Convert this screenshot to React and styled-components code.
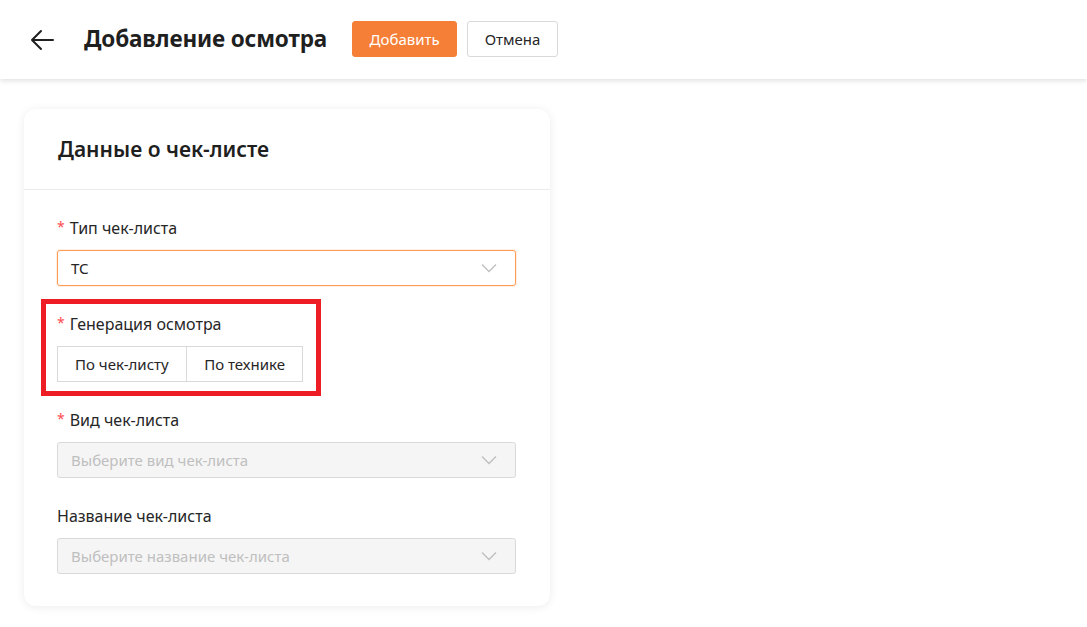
import React from "react"
import styled, { createGlobalStyle } from "styled-components"

const GlobalStyle = createGlobalStyle`
  html, body {
    margin: 0;
    padding: 0;
    background: #ffffff;
    font-family: "Noto Sans", "Open Sans", sans-serif;
    color: #1f1f1f;
  }
  * { box-sizing: border-box; }
`

const Header = styled.header`
  height: 79px;
  display: flex;
  align-items: center;
  padding: 0 0 0 28px;
  background: #fff;
  box-shadow: 0 2px 5px rgba(0, 0, 0, 0.12);
  position: relative;
  z-index: 1;
`

const BackButton = styled.button`
  border: 0;
  background: none;
  padding: 0;
  width: 28px;
  height: 28px;
  display: flex;
  align-items: center;
  justify-content: center;
  color: #1f1f1f;
  margin-right: 28px;
  cursor: pointer;
`

const Title = styled.h1`
  margin: 0 25px 0 0;
  font-size: 22.5px;
  font-weight: 700;
  letter-spacing: -0.15px;
  color: #1f1f1f;
  position: relative;
  top: -1px;
`

const Button = styled.button`
  height: 36px;
  padding: 0 16.5px;
  border-radius: 3px;
  font-family: inherit;
  font-size: 15px;
  margin-right: 10px;
  cursor: pointer;
  position: relative;
  top: -1px;
  border: 1px solid ${(p) => (p.$primary ? "#f67f37" : "#d9d9d9")};
  background: ${(p) => (p.$primary ? "#f67f37" : "#fff")};
  color: ${(p) => (p.$primary ? "#fff" : "#262626")};
`

const Main = styled.main`
  padding: 30px 24px;
`

const Card = styled.section`
  width: 526px;
  background: #fff;
  border-radius: 12px;
  box-shadow: 0 1px 10px rgba(0, 0, 0, 0.08);
`

const CardHeader = styled.div`
  height: 81px;
  display: flex;
  align-items: center;
  padding: 0 34px;
  border-bottom: 1px solid #ececec;
`

const CardTitle = styled.h2`
  margin: 0;
  font-size: 21px;
  font-weight: 600;
  color: #1f1f1f;
`

const CardBody = styled.div`
  padding: 26px 34px 32px 33px;
  display: flex;
  flex-direction: column;
  gap: 26px;
`

const Field = styled.div`
  position: relative;
`

const Label = styled.div`
  font-size: 16px;
  line-height: 24px;
  margin-bottom: 10px;
  color: #262626;
  display: flex;
  align-items: center;
`

const Star = styled.span`
  color: #ff4d4f;
  font-size: 14px;
  margin-right: 5px;
  position: relative;
  top: -1px;
`

const Select = styled.div`
  height: 36px;
  width: 100%;
  border-radius: 3px;
  border: 1px solid ${(p) => (p.$focused ? "#ff9a52" : "#d9d9d9")};
  background: ${(p) => (p.$disabled ? "#f5f5f5" : "#fff")};
  box-shadow: ${(p) => (p.$focused ? "0 0 0 1px rgba(255, 154, 82, 0.15)" : "none")};
  display: flex;
  align-items: center;
  justify-content: space-between;
  padding: 0 18px 0 13px;
  font-size: 15px;
  color: ${(p) => (p.$disabled ? "#bfbfbf" : "#262626")};
`

const Segments = styled.div`
  display: inline-flex;
  height: 36px;
`

const Segment = styled.button`
  height: 36px;
  padding: 0 ${(p) => (p.$first ? "17px" : "17.5px")};
  font-family: inherit;
  font-size: 15px;
  color: #262626;
  background: #fff;
  border: 1px solid #d9d9d9;
  margin-left: ${(p) => (p.$first ? "0" : "-1px")};
  cursor: pointer;
`

const Highlight = styled.div`
  position: absolute;
  left: -16px;
  top: -13px;
  width: 280px;
  height: 97px;
  border: 5px solid #ee1d25;
  pointer-events: none;
`

const Chevron = () => (
  <svg width="16" height="10" viewBox="0 0 16 10" fill="none">
    <path d="M1 1.5 L8 8.5 L15 1.5" stroke="#bfbfbf" strokeWidth="1.3" />
  </svg>
)

const ArrowLeft = () => (
  <svg width="26" height="22" viewBox="0 0 26 22" fill="none">
    <path d="M24 11 H3 M12 2 L3 11 L12 20" stroke="#1f1f1f" strokeWidth="2" strokeLinecap="round" strokeLinejoin="round" />
  </svg>
)

export default function App() {
  return (
    <>
      <GlobalStyle />
      <Header>
        <BackButton aria-label="Назад">
          <ArrowLeft />
        </BackButton>
        <Title>Добавление осмотра</Title>
        <Button $primary>Добавить</Button>
        <Button>Отмена</Button>
      </Header>
      <Main>
        <Card>
          <CardHeader>
            <CardTitle>Данные о чек-листе</CardTitle>
          </CardHeader>
          <CardBody>
            <Field>
              <Label><Star>*</Star>Тип чек-листа</Label>
              <Select $focused>
                <span>{"\u0422\u0421"}</span>
                <Chevron />
              </Select>
            </Field>
            <Field>
              <Highlight />
              <Label><Star>*</Star>Генерация осмотра</Label>
              <Segments>
                <Segment $first>По чек-листу</Segment>
                <Segment>По технике</Segment>
              </Segments>
            </Field>
            <Field>
              <Label><Star>*</Star>Вид чек-листа</Label>
              <Select $disabled>
                <span>Выберите вид чек-листа</span>
                <Chevron />
              </Select>
            </Field>
            <Field>
              <Label>Название чек-листа</Label>
              <Select $disabled>
                <span>Выберите название чек-листа</span>
                <Chevron />
              </Select>
            </Field>
          </CardBody>
        </Card>
      </Main>
    </>
  )
}
